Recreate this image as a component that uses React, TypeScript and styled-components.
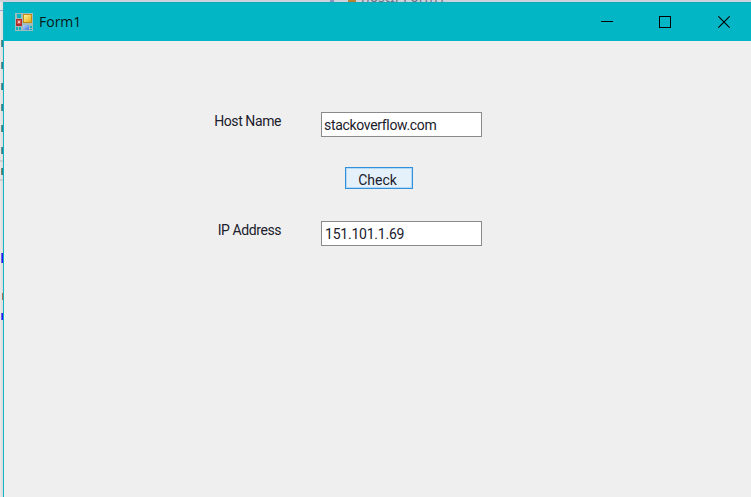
import React from "react";
import styled, { createGlobalStyle } from "styled-components";

const Global = createGlobalStyle`
  * { box-sizing: border-box; }
  html, body { margin: 0; padding: 0; overflow: hidden; }
`;

const Desktop = styled.div`
  width: 751px;
  height: 497px;
  display: flex;
  flex-direction: column;
  overflow: hidden;
  background: #e6e6e8;
`;

const TabStrip = styled.div`
  height: 2px;
  flex: none;
  overflow: hidden;
  display: flex;
  align-items: flex-end;
  background: #cdd2dd;
  padding-left: 330px;
`;

const TabMark = styled.span<{ $color: string; $width: number; $gap: number }>`
  width: ${(p) => p.$width}px;
  height: 2px;
  flex: none;
  margin-right: ${(p) => p.$gap}px;
  background: ${(p) => p.$color};
`;

const TabText = styled.span`
  height: 16px;
  font: 14px/16px "Noto Sans", sans-serif;
  color: #6c7388;
  white-space: pre;
  margin-bottom: -3px;
`;

const Main = styled.div`
  flex: 1;
  display: flex;
  min-height: 0;
`;

const Gutter = styled.div`
  width: 3px;
  flex: none;
  display: flex;
  flex-direction: column;
  align-items: flex-end;
  overflow: hidden;
  background: linear-gradient(90deg, #e9e9e9, #dcdcdc);
`;

const CodeEdge = styled.span<{ $gap: number; $height: number; $width: number; $left: string; $right: string }>`
  flex: none;
  width: ${(p) => p.$width}px;
  height: ${(p) => p.$height}px;
  margin-top: ${(p) => p.$gap}px;
  background: linear-gradient(90deg, ${(p) => p.$left} 50%, ${(p) => p.$right} 50%);
`;

const Window = styled.div`
  flex: 1;
  display: flex;
  flex-direction: column;
  border-left: 1px solid #15b3bf;
  background: #efefef;
`;

const TitleBar = styled.header`
  height: 39px;
  flex: none;
  display: flex;
  align-items: center;
  padding-left: 11px;
  background: #02b6c5;
  border-top: 1px solid #12a9b7;
`;

const Title = styled.span`
  flex: 1;
  margin-left: 6px;
  font: 14px/20px "Open Sans", sans-serif;
  color: #06191b;
`;

const Captions = styled.div`
  display: flex;
  margin-right: -2px;
`;

const Caption = styled.div`
  width: 58.5px;
  display: flex;
  justify-content: center;
`;

const Form = styled.main`
  display: flex;
  flex-direction: column;
  padding-top: 71px;
  font-family: Roboto, sans-serif;
  font-size: 14px;
  color: #20202c;
`;

const Row = styled.div<{ $gap?: number }>`
  display: flex;
  height: 25px;
  margin-top: ${(p) => p.$gap ?? 0}px;
`;

const Label = styled.label`
  width: 277px;
  margin-right: 40px;
  text-align: right;
  line-height: 18px;
  letter-spacing: -0.42px;
  white-space: nowrap;
`;

const Field = styled.div<{ $spacing: number; $indent: number }>`
  width: 161px;
  height: 25px;
  border: 1px solid #8a8a8a;
  background: #fff;
  padding-left: ${(p) => p.$indent}px;
  line-height: 24px;
  letter-spacing: ${(p) => p.$spacing}px;
  white-space: nowrap;
`;

const CheckButton = styled.button`
  width: 68px;
  height: 22px;
  margin: 30px 0 0 341px;
  padding: 3px 3px 0 0;
  border: 1px solid #3291dc;
  box-shadow: inset 0 0 0 1px #b5d9f5;
  background: #e4f0fa;
  font: 14px/18px Roboto, sans-serif;
  color: #20202c;
`;

const edges = [
  { gap: 29, height: 7, width: 2, left: "#6f9080", right: "#1b86a0" },
  { gap: 15, height: 7, width: 2, left: "#6f9080", right: "#1b86a0" },
  { gap: 14, height: 7, width: 2, left: "#6f9080", right: "#1b86a0" },
  { gap: 14, height: 7, width: 2, left: "#6f9080", right: "#1b86a0" },
  { gap: 14, height: 7, width: 2, left: "#6f9080", right: "#1b86a0" },
  { gap: 15, height: 7, width: 2, left: "#6f9080", right: "#1b86a0" },
  { gap: 6, height: 2, width: 3, left: "#cbccd0", right: "#cbccd0" },
  { gap: 6, height: 7, width: 2, left: "#8c8060", right: "#1b86a0" },
  { gap: 4, height: 2, width: 3, left: "#cbccd0", right: "#cbccd0" },
  { gap: 72, height: 10, width: 2, left: "#7060e8", right: "#1a1aff" },
  { gap: 30, height: 7, width: 1, left: "#a87050", right: "#a87050" },
  { gap: 13, height: 7, width: 2, left: "#7060e8", right: "#1a1aff" },
];

const FormIcon = () => (
  <svg width="18" height="18" viewBox="0 0 18 18" shapeRendering="crispEdges">
    <defs>
      <linearGradient id="gold" x2="1" y2="1">
        <stop stopColor="#fff3a0" />
        <stop offset="1" stopColor="#e9a910" />
      </linearGradient>
      <linearGradient id="blue" x2="1" y2="1">
        <stop stopColor="#b4d0ff" />
        <stop offset="1" stopColor="#3f79e0" />
      </linearGradient>
    </defs>
    <path d="M0 0h18v18H0z" fill="#a1bcbc" />
    <path d="M2 1h4v4H2zM1 14h2v3H1zM4 14h2v3H4zM15 13h2v2h-2zM15 16h2v1h-2z" fill="#08b3c0" />
    <path d="M1 6h6v7H1z" fill="#b02c2c" />
    <path d="M2 7h4v4H2z" fill="#cf5551" />
    <path d="M3 8h2v2H3z" fill="#f5c0b4" />
    <path d="M8 1h9v9H8z" fill="#c38c16" />
    <path d="M9 2h7v7H9z" fill="url(#gold)" />
    <path d="M8 12h6v5H8z" fill="url(#blue)" />
  </svg>
);

export default function App() {
  return (
    <>
      <Global />
      <Desktop>
        <TabStrip>
          <TabMark $color="#8a93bd" $width={4} $gap={14} />
          <TabMark $color="#b78336" $width={8} $gap={5} />
          <TabText>hostIPForm1</TabText>
        </TabStrip>
        <Main>
          <Gutter>
            <CodeEdge $gap={8} $height={1} $width={3} $left="#91aad2" $right="#91aad2" />
            {edges.map((e, i) => (
              <CodeEdge key={i} $gap={e.gap} $height={e.height} $width={e.width} $left={e.left} $right={e.right} />
            ))}
          </Gutter>
          <Window>
            <TitleBar>
              <FormIcon />
              <Title>Form1</Title>
              <Captions>
                <Caption>
                  <svg width="12" height="12" viewBox="0 0 12 12" shapeRendering="crispEdges">
                    <path d="M0 5.5h12" stroke="#000" />
                  </svg>
                </Caption>
                <Caption>
                  <svg width="12" height="12" viewBox="0 0 12 12" shapeRendering="crispEdges">
                    <path d="M.5.5h11v11H.5z" fill="none" stroke="#000" />
                  </svg>
                </Caption>
                <Caption>
                  <svg width="12" height="12" viewBox="0 0 12 12">
                    <path d="M.3.3l11.4 11.4M11.7.3L.3 11.7" stroke="#000" strokeWidth="1.1" />
                  </svg>
                </Caption>
              </Captions>
            </TitleBar>
            <Form>
              <Row>
                <Label>Host Name</Label>
                <Field $spacing={-0.32} $indent={2}>stackoverflow.com</Field>
              </Row>
              <CheckButton type="button">Check</CheckButton>
              <Row $gap={32}>
                <Label>IP Address</Label>
                <Field $spacing={-0.22} $indent={3}>151.101.1.69</Field>
              </Row>
            </Form>
          </Window>
        </Main>
      </Desktop>
    </>
  );
}
